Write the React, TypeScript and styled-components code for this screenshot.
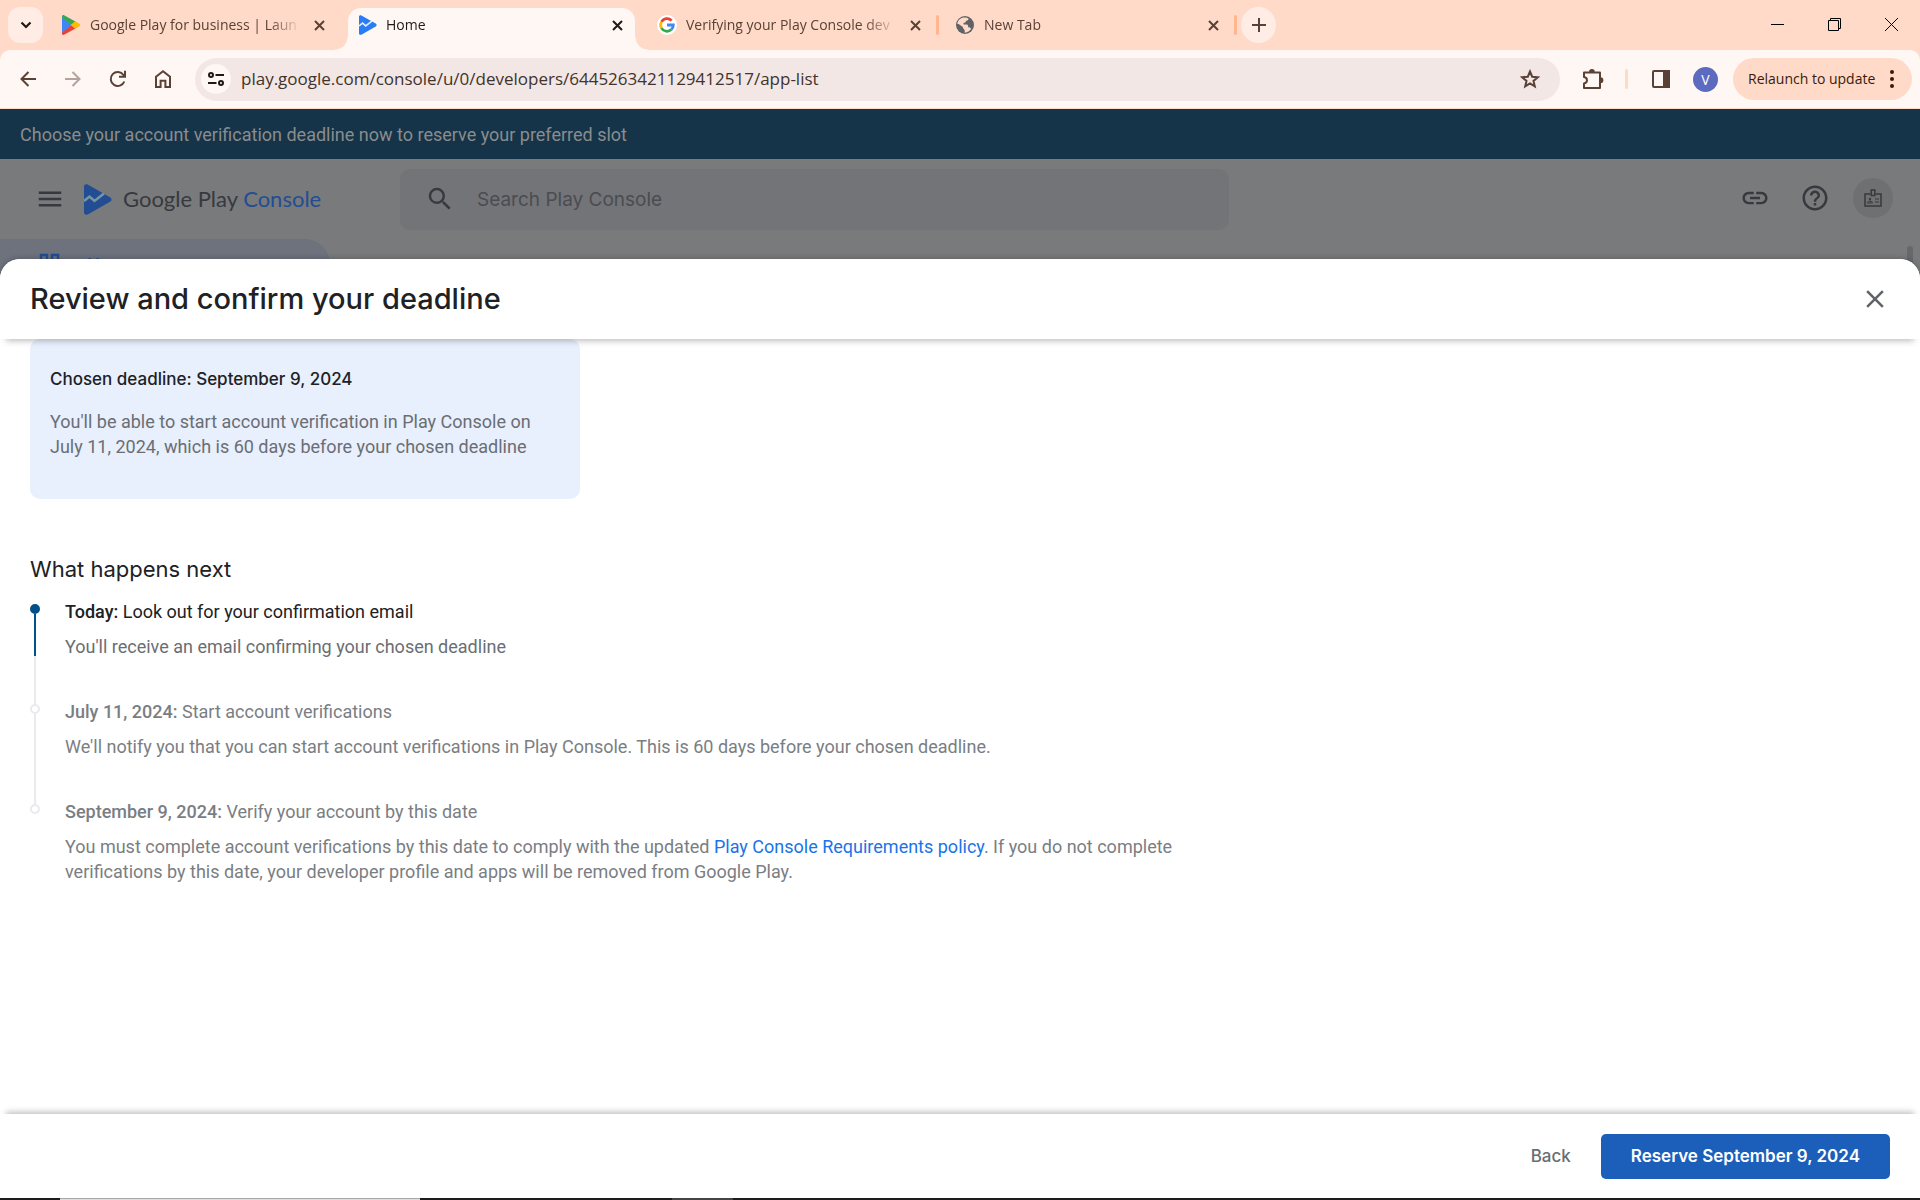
import React from "react";
import styled, { createGlobalStyle } from "styled-components";
import { MdLink, MdHelpOutline, MdSearch, MdMenu, MdClose } from "react-icons/md";

const chromeFont = `"Open Sans", "Noto Sans", sans-serif`;
const bodyFont = `Roboto, "Liberation Sans", sans-serif`;
const displayFont = `Inter, Roboto, sans-serif`;
const brandFont = `Lato, Inter, sans-serif`;

const GlobalStyle = createGlobalStyle`
  *, *::before, *::after { box-sizing: border-box; }
  body { margin: 0; font-family: ${bodyFont}; }
  button { border: 0; padding: 0; background: none; font: inherit; color: inherit; cursor: pointer; }
  input { border: 0; padding: 0; background: none; font: inherit; outline: 0; min-width: 0; }
  h1, h2, h3, p, ol { margin: 0; padding: 0; }
  svg { display: block; flex: none; }
`;

const Screen = styled.div`
  display: flex;
  flex-direction: column;
  height: 100vh;
  overflow: hidden;
  background: #fff;
`;

/* ---------- browser tab strip ---------- */

const TabStrip = styled.header`
  display: flex;
  height: 50px;
  padding-left: 8px;
  background: #ffdac8;
  color: #5a4136;
  font-family: ${chromeFont};
`;

const StripButton = styled.button<{ $round?: boolean }>`
  display: grid;
  place-items: center;
  flex: none;
  width: 35px;
  height: 36px;
  margin: 7px 6px 0 0;
  border-radius: ${(p) => (p.$round ? "50%" : "12px")};
  background: #ffece4;
  color: ${(p) => (p.$round ? "#5a4136" : "#201a17")};
`;

const TabSlot = styled.div`
  flex: 0 1 298px;
  min-width: 0;
  display: flex;
  padding: 8px 4px 0 1px;
`;

const TabBody = styled.div<{ $active?: boolean }>`
  position: relative;
  flex: 1;
  min-width: 0;
  display: flex;
  align-items: center;
  padding: 0 8px 8px 11px;
  border-radius: 13px 13px 0 0;
  background: ${(p) => (p.$active ? "#fff7f4" : "transparent")};
  color: ${(p) => (p.$active ? "#201a17" : "#5a4136")};
  &::before, &::after {
    content: "";
    display: ${(p) => (p.$active ? "block" : "none")};
    position: absolute;
    bottom: 0;
    width: 13px;
    height: 13px;
  }
  &::before { right: 100%; background: radial-gradient(circle at 0 0, transparent 12px, #fff7f4 13px); }
  &::after { left: 100%; background: radial-gradient(circle at 100% 0, transparent 12px, #fff7f4 13px); }
`;

const TabTitle = styled.span`
  flex: 1;
  min-width: 0;
  margin: 0 8px 0 9px;
  overflow: hidden;
  white-space: nowrap;
  font-size: 14px;
  line-height: 22px;
  mask-image: linear-gradient(to right, #000 calc(100% - 32px), transparent);
`;

const TabClose = styled.button`
  display: grid;
  place-items: center;
  flex: none;
  width: 20px;
  height: 20px;
`;

const TabDivider = styled.span<{ $shown?: boolean }>`
  flex: none;
  width: 3px;
  height: 20px;
  margin: 7px 0 0 3px;
  border-radius: 2px;
  background: ${(p) => (p.$shown ? "#ffb68f" : "transparent")};
`;

const WindowControls = styled.div`
  display: flex;
  margin-left: auto;
  color: #000;
`;

const WindowButton = styled.button`
  display: grid;
  place-items: center;
  width: 57px;
  height: 49px;
`;

/* ---------- browser toolbar ---------- */

const ToolbarBack = styled.div`
  background: #ffdac8;
  padding-bottom: 1px;
`;

const Toolbar = styled.nav`
  display: flex;
  align-items: center;
  gap: 15px;
  height: 58px;
  padding: 0 8px 0 10px;
  border-radius: 10px 10px 0 0;
  background: #fff7f4;
  color: #5a4136;
  font-family: ${chromeFont};
`;

const NavButtons = styled.div`
  display: flex;
  gap: 10px;
`;

const ToolButton = styled.button<{ $muted?: boolean }>`
  display: grid;
  place-items: center;
  flex: none;
  width: 35px;
  height: 35px;
  color: ${(p) => (p.$muted ? "#b4a39c" : "#5a4136")};
`;

const Omnibox = styled.div`
  flex: 1;
  min-width: 0;
  display: flex;
  align-items: center;
  height: 43px;
  padding: 0 13px 0 6px;
  border-radius: 22px;
  background: #f2e7e4;
`;

const SiteButton = styled.button`
  display: grid;
  place-items: center;
  flex: none;
  width: 30px;
  height: 30px;
  border-radius: 50%;
  background: #fff7f4;
  color: #201a17;
`;

const UrlInput = styled.input`
  flex: 1;
  margin: 0 10px;
  font-size: 17px;
  line-height: 24px;
  color: #41332d;
`;

const ToolDivider = styled.span`
  flex: none;
  width: 3px;
  height: 20px;
  border-radius: 2px;
  background: #ffdac8;
`;

const Avatar = styled.button`
  flex: none;
  width: 25px;
  height: 25px;
  border-radius: 50%;
  background: #5c6bc0;
  color: #fff;
  font-size: 14px;
  line-height: 25px;
`;

const RelaunchButton = styled.button`
  display: flex;
  align-items: center;
  justify-content: space-between;
  flex: none;
  min-width: 179px;
  height: 42px;
  padding: 0 18px 0 15px;
  border-radius: 21px;
  background: #ffdac8;
  color: #3a1a0a;
  font-size: 14px;
  line-height: 22px;
`;

/* ---------- dimmed console page ---------- */

const Page = styled.div`
  position: relative;
  flex: 1;
  min-height: 0;
  background: #797a7c;
`;

const Banner = styled.div`
  display: flex;
  align-items: center;
  height: 50px;
  padding: 0 20px;
  background: #153449;
  color: #8b8c8c;
  font-size: 18px;
  line-height: 25px;
`;

const ConsoleHeader = styled.div`
  display: flex;
  align-items: center;
  height: 80px;
  padding: 0 27px 0 35px;
  color: #37393e;
`;

const PlainButton = styled.button`
  display: grid;
  place-items: center;
  flex: none;
`;

const ActionButton = styled(PlainButton)`
  width: 44px;
  height: 44px;
`;

const Brand = styled.a`
  display: flex;
  align-items: center;
  flex: none;
  gap: 11px;
  width: 316px;
  margin: 0 0 0 19px;
  color: #37393e;
  font-family: ${brandFont};
  font-size: 22px;
  line-height: 30px;
  text-decoration: none;
`;

const BrandAccent = styled.span`
  color: #234d92;
`;

const SearchBox = styled.label`
  flex: 0 1 829px;
  min-width: 0;
  display: flex;
  align-items: center;
  gap: 22px;
  height: 61px;
  padding: 0 25px;
  border-radius: 10px;
  background: #737478;
`;

const SearchInput = styled.input`
  flex: 1;
  font-family: ${displayFont};
  font-size: 19px;
  line-height: 25px;
  &::placeholder { color: #4a4c50; opacity: 1; }
`;

const HeaderActions = styled.div`
  display: flex;
  align-items: center;
  gap: 16px;
  margin-left: auto;
  padding-bottom: 3px;
`;

const AccountButton = styled.button`
  display: grid;
  place-items: center;
  width: 40px;
  height: 40px;
  border-radius: 50%;
  background: #6f7072;
`;

const PageBody = styled.div`
  display: flex;
  justify-content: space-between;
`;

const NavLink = styled.a`
  display: flex;
  align-items: center;
  gap: 27px;
  width: 330px;
  height: 50px;
  padding-left: 38px;
  border-radius: 0 25px 25px 0;
  background: #6d727d;
  color: #234d92;
  font-size: 18px;
  font-weight: 500;
  text-decoration: none;
`;

const ScrollThumb = styled.span`
  width: 6px;
  height: 120px;
  margin: 7px 7px 0 0;
  border-radius: 3px;
  background: #67686b;
`;

/* ---------- dialog ---------- */

const Dialog = styled.section`
  position: absolute;
  inset: 150px 0 0;
  display: flex;
  flex-direction: column;
  border-radius: 20px 20px 0 0;
  background: #fff;
  box-shadow: 0 0 6px rgba(0, 0, 0, 0.25);
  color: #202124;
`;

const DialogHeader = styled.div`
  display: flex;
  align-items: center;
  justify-content: space-between;
  flex: none;
  height: 80px;
  padding: 0 30px;
  border-radius: 20px 20px 0 0;
  background: #fff;
  box-shadow: 0 8px 6px -6px rgba(0, 0, 0, 0.26);
  z-index: 1;
`;

const DialogTitle = styled.h1`
  font-family: ${displayFont};
  font-size: 29px;
  font-weight: 450;
  line-height: 34px;
`;

const CloseButton = styled(PlainButton)`
  width: 30px;
  height: 30px;
  color: #5f6368;
`;

const DialogContent = styled.div`
  flex: 1;
  min-height: 0;
  padding: 0 30px;
  overflow: hidden;
  font-size: 18px;
  line-height: 25px;
`;

const DeadlineCard = styled.div`
  max-width: 550px;
  padding: 28px 20px 40px;
  border-radius: 10px;
  background: #e8effd;
`;

const CardTitle = styled.h2`
  margin-bottom: 17px;
  font-family: ${displayFont};
  font-size: 17px;
  font-weight: 500;
  line-height: 25px;
`;

const CardText = styled.p`
  color: #6a6e73;
`;

const SectionTitle = styled.h2`
  margin: 55px 0 20px;
  font-family: ${displayFont};
  font-size: 22px;
  font-weight: 400;
  line-height: 30px;
`;

const Timeline = styled.ol`
  max-width: 1170px;
  list-style: none;
`;

const Step = styled.li`
  display: flex;
  gap: 25px;
`;

const Marker = styled.span`
  display: flex;
  flex-direction: column;
  align-items: center;
  flex: none;
  width: 10px;
`;

const Dot = styled.span<{ $current?: boolean }>`
  width: 10px;
  height: 10px;
  border: 2px solid ${(p) => (p.$current ? "#01508a" : "#e8eaed")};
  border-radius: 50%;
  background: ${(p) => (p.$current ? "#01508a" : "#fff")};
`;

const Line = styled.span<{ $current?: boolean }>`
  flex: 1;
  width: 2px;
  background: ${(p) => (p.$current ? "linear-gradient(#01508a 42px, #e8eaed 42px)" : "#e8eaed")};
`;

const StepText = styled.div<{ $last?: boolean }>`
  margin-top: -5px;
  padding-bottom: ${(p) => (p.$last ? "0" : "45px")};
  color: #7a7e83;
`;

const StepTitle = styled.h3<{ $current?: boolean }>`
  margin-bottom: 10px;
  font-size: 18px;
  font-weight: 400;
  line-height: 25px;
  color: ${(p) => (p.$current ? "#202124" : "#7a7e83")};
  b { font-weight: 500; }
`;

const StepBody = styled.p<{ $current?: boolean }>`
  color: ${(p) => (p.$current ? "#6a6e73" : "#7a7e83")};
`;

const PolicyLink = styled.a`
  color: #1a73e8;
  text-decoration: none;
`;

const DialogFooter = styled.div`
  display: flex;
  align-items: center;
  justify-content: flex-end;
  gap: 30px;
  flex: none;
  height: 84px;
  padding: 0 30px;
  background: #fff;
  box-shadow: 0 -8px 6px -6px rgba(0, 0, 0, 0.26);
  font-family: ${displayFont};
  font-size: 17px;
  line-height: 25px;
`;

const BackButton = styled.button`
  height: 45px;
  color: #6a6d72;
  font-weight: 500;
`;

const ReserveButton = styled.button`
  height: 45px;
  padding: 0 30px;
  border-radius: 5px;
  background: #1b5fbb;
  color: #fff;
  font-weight: 600;
`;

/* ---------- desktop task bar edge ---------- */

const TaskbarEdge = styled.div`
  display: flex;
  flex: none;
  height: 2px;
  padding-left: 60px;
  background: #221f22;
`;

const TaskSearch = styled.span`
  width: 360px;
  margin-right: 252px;
  border-top: 1px solid #bdbdbd;
  background: #f2f2f2;
`;

const TaskItem = styled.span`
  width: 61px;
  background: #4d4b4d;
`;

/* ---------- icons ---------- */

const CrossIcon = () => (
  <svg width="11" height="11" viewBox="0 0 11 11" fill="none" stroke="currentColor" strokeWidth="2">
    <path d="M1 1l9 9M10 1l-9 9" />
  </svg>
);

const PlayStoreIcon = () => (
  <svg width="20" height="20" viewBox="0 0 20 20">
    <path d="M1 2v16l9-8z" fill="#4285f4" />
    <path d="M1 1.600C1 .2 2.400-.3 3.500.4L14.500 6.400 10 10 1 2.800z" fill="#34a853" />
    <path d="M1 18.400c0 1.400 1.400 1.900 2.500 1.200l11-6L10 10l-9 7.200z" fill="#ea4335" />
    <path d="M14.200 6.200 18 8.400c1.400.8 1.400 2.400 0 3.200l-3.800 2.200L10 10z" fill="#fbbc04" />
    <path d="M1 2.600v14.800l9-7.400z" fill="#4285f4" />
  </svg>
);

const ConsoleIcon = ({ w, h, fill, line }: { w: number; h: number; fill: string; line: string }) => (
  <svg width={w} height={h} viewBox="0 0 28 32" preserveAspectRatio="none">
    <path d="M0 2.500C0 .6 2 -.4 3.700.6L26 13.600c2 1.200 2 3.600 0 4.800L3.700 31.400C2 32.400 0 31.400 0 29.500z" fill={fill} />
    <path d="M0 17.500 5.500 13l5 4.500L20 9.800" fill="none" stroke={line} strokeWidth="2.600" />
  </svg>
);

const GoogleIcon = () => (
  <svg width="20" height="20" viewBox="0 0 20 20">
    <circle cx="10" cy="10" r="10" fill="#fff" />
    <g fill="none" strokeWidth="2.800">
      <path d="M14.600 5.600A6.300 6.300 0 0 0 4.500 6.900" stroke="#ea4335" />
      <path d="M4.500 6.900a6.300 6.300 0 0 0 0 6.200" stroke="#fbbc04" />
      <path d="M4.500 13.100a6.300 6.300 0 0 0 9.800 1.500" stroke="#34a853" />
      <path d="M14.300 14.600A6.300 6.300 0 0 0 16.300 10H10" stroke="#4285f4" />
    </g>
  </svg>
);

const GlobeIcon = () => (
  <svg width="20" height="20" viewBox="0 0 20 20">
    <circle cx="10" cy="10" r="9" fill="#5f6368" />
    <path d="M8.500 2.500c2.500-.2 4 .3 5 1 .2 1.600-1 2.200-2.300 2.300-.4 1.700-1.500 2-2.700 2.100v1.700h3.200c1.400.2 1.500 1.500 1.500 2.600l1.700.4 1.300 1.200a8 8 0 0 1-6.400 3.900c-.4-1 .3-2-.4-3-1-.6-1.500-1.500-1.500-2.600L4 9.300c-.7-.5-1.400-.7-1.800-.6C2.700 5.400 5.200 3 8.500 2.500z" fill="#ffdac8" />
  </svg>
);

const tabs = [
  { title: "Google Play for business | Laun", icon: <PlayStoreIcon /> },
  { title: "Home", icon: <ConsoleIcon w={18} h={20} fill="#2a7bf6" line="#d6f0ff" />, active: true },
  { title: "Verifying your Play Console dev", icon: <GoogleIcon />, divider: true },
  { title: "New Tab", icon: <GlobeIcon />, divider: true },
];

const steps = [
  {
    date: "Today:",
    title: "Look out for your confirmation email",
    body: "You'll receive an email confirming your chosen deadline",
    current: true,
  },
  {
    date: "July 11, 2024:",
    title: "Start account verifications",
    body: "We'll notify you that you can start account verifications in Play Console. This is 60 days before your chosen deadline.",
  },
  {
    date: "September 9, 2024:",
    title: "Verify your account by this date",
    body: (
      <>
        You must complete account verifications by this date to comply with the updated{" "}
        <PolicyLink href="#policy">Play Console Requirements policy</PolicyLink>. If you do not complete
        verifications by this date, your developer profile and apps will be removed from Google Play.
      </>
    ),
  },
];

const BrowserTabs = () => (
  <TabStrip>
    <StripButton aria-label="Search tabs">
      <svg width="12" height="8" viewBox="0 0 12 8" fill="none" stroke="currentColor" strokeWidth="2.200">
        <path d="M1.500 1.500 6 6l4.500-4.500" />
      </svg>
    </StripButton>
    {tabs.map((tab) => (
      <TabSlot key={tab.title}>
        <TabBody $active={tab.active}>
          {tab.icon}
          <TabTitle>{tab.title}</TabTitle>
          <TabClose aria-label={`Close ${tab.title}`}>
            <CrossIcon />
          </TabClose>
        </TabBody>
        <TabDivider $shown={tab.divider} />
      </TabSlot>
    ))}
    <StripButton $round aria-label="New tab">
      <svg width="14" height="14" viewBox="0 0 14 14" stroke="currentColor" strokeWidth="2">
        <path d="M7 0v14M0 7h14" />
      </svg>
    </StripButton>
    <WindowControls>
      <WindowButton aria-label="Minimize">
        <svg width="13" height="13" viewBox="0 0 13 13" stroke="currentColor">
          <path d="M0 6.500h13" />
        </svg>
      </WindowButton>
      <WindowButton aria-label="Restore">
        <svg width="13" height="13" viewBox="0 0 13 13" fill="none" stroke="currentColor">
          <path d="M.5 2.500h10v10H.5zM2.500 2.500v-2h10v10h-2" />
        </svg>
      </WindowButton>
      <WindowButton aria-label="Close window">
        <svg width="13" height="13" viewBox="0 0 13 13" stroke="currentColor">
          <path d="M0 0l13 13M13 0 0 13" />
        </svg>
      </WindowButton>
    </WindowControls>
  </TabStrip>
);

const BrowserToolbar = () => (
  <ToolbarBack>
    <Toolbar>
      <NavButtons>
        <ToolButton aria-label="Back">
          <svg width="16" height="16" viewBox="0 0 16 16" fill="none" stroke="currentColor" strokeWidth="2">
            <path d="M16 8H1.500M8.500 1 1.500 8l7 7" />
          </svg>
        </ToolButton>
        <ToolButton $muted aria-label="Forward">
          <svg width="16" height="16" viewBox="0 0 16 16" fill="none" stroke="currentColor" strokeWidth="2">
            <path d="M0 8h14.500M7.500 1l7 7-7 7" />
          </svg>
        </ToolButton>
        <ToolButton aria-label="Reload">
          <svg width="18" height="18" viewBox="0 0 18 18" fill="none" stroke="currentColor" strokeWidth="2">
            <path d="M15.300 11.500A7 7 0 1 1 14.500 5l1.500 1.800M16 .8v6h-6" />
          </svg>
        </ToolButton>
        <ToolButton aria-label="Home">
          <svg width="18" height="18" viewBox="0 0 18 18" fill="none" stroke="currentColor" strokeWidth="2">
            <path d="M2 6.800 9 1.300l7 5.500V17h-4.600v-6.200H6.600V17H2z" />
          </svg>
        </ToolButton>
      </NavButtons>
      <Omnibox>
        <SiteButton aria-label="View site information">
          <svg width="16" height="14" viewBox="0 0 16 14" fill="none" stroke="currentColor" strokeWidth="2">
            <circle cx="3" cy="3" r="2" />
            <path d="M7.500 3H16M0 11h8.500" />
            <circle cx="13" cy="11" r="2" />
          </svg>
        </SiteButton>
        <UrlInput
          aria-label="Address"
          defaultValue="play.google.com/console/u/0/developers/6445263421129412517/app-list"
        />
        <ToolButton aria-label="Bookmark this tab">
          <svg width="20" height="20" viewBox="0 0 20 20" fill="none" stroke="currentColor" strokeWidth="2">
            <path d="M10 2.500l2.200 5.200 5.600.5-4.300 3.700 1.300 5.500-4.800-2.900-4.800 2.900 1.300-5.500-4.300-3.700 5.600-.5z" />
          </svg>
        </ToolButton>
      </Omnibox>
      <ToolButton aria-label="Extensions">
        <svg width="22" height="22" viewBox="0 0 22 22" fill="none" stroke="currentColor" strokeWidth="2">
          <path d="M2 4.500h16V20H2v-4.500c2-.3 3-1.500 3-3.200S4 9.300 2 9z" strokeLinejoin="round" />
          <path d="M7 4a2.900 2.900 0 0 1 5.800 0zM18.500 9.300a2.900 2.900 0 0 1 0 5.800z" fill="currentColor" stroke="none" />
        </svg>
      </ToolButton>
      <ToolDivider />
      <ToolButton aria-label="Side panel">
        <svg width="18" height="18" viewBox="0 0 18 18" fill="none" stroke="currentColor" strokeWidth="2">
          <rect x="1" y="1" width="16" height="16" rx="1" />
          <path d="M12 1h5v16h-5z" fill="currentColor" />
        </svg>
      </ToolButton>
      <Avatar aria-label="Profile V">V</Avatar>
      <RelaunchButton>
        Relaunch to update
        <svg width="4" height="18" viewBox="0 0 4 18" fill="currentColor">
          <circle cx="2" cy="2" r="2" />
          <circle cx="2" cy="9" r="2" />
          <circle cx="2" cy="16" r="2" />
        </svg>
      </RelaunchButton>
    </Toolbar>
  </ToolbarBack>
);

const ConsolePage = () => (
  <>
    <Banner>Choose your account verification deadline now to reserve your preferred slot</Banner>
    <ConsoleHeader>
      <PlainButton aria-label="Main menu">
        <MdMenu size={30} />
      </PlainButton>
      <Brand href="#home">
        <ConsoleIcon w={28} h={31} fill="#234d92" line="#7495a5" />
        <span>
          Google Play <BrandAccent>Console</BrandAccent>
        </span>
      </Brand>
      <SearchBox>
        <MdSearch size={30} />
        <SearchInput type="search" placeholder="Search Play Console" aria-label="Search Play Console" />
      </SearchBox>
      <HeaderActions>
        <ActionButton aria-label="Copy link">
          <MdLink size={30} />
        </ActionButton>
        <ActionButton aria-label="Help">
          <MdHelpOutline size={30} />
        </ActionButton>
        <AccountButton aria-label="Developer account">
          <svg width="18" height="18" viewBox="0 0 18 18" fill="none" stroke="currentColor" strokeWidth="1.500">
            <path d="M6.500 5H1v12h16V5h-5.500" />
            <path d="M7.200 1h3.600v5.500H7.200z" />
            <circle cx="6" cy="10" r="1.200" fill="currentColor" stroke="none" />
            <path d="M3.500 14c0-2.500 5-2.500 5 0zM11 10h4M11 13h4" strokeWidth="1" />
          </svg>
        </AccountButton>
      </HeaderActions>
    </ConsoleHeader>
    <PageBody>
      <NavLink href="#home">
        <svg width="22" height="22" viewBox="0 0 22 22" fill="none" stroke="currentColor" strokeWidth="2.500">
          <rect x="3" y="2" width="6" height="7" />
          <rect x="14" y="2" width="6" height="7" />
          <rect x="3" y="13" width="6" height="7" />
          <rect x="14" y="13" width="6" height="7" />
        </svg>
        Home
      </NavLink>
      <ScrollThumb />
    </PageBody>
  </>
);

const DeadlineDialog = () => (
  <Dialog role="dialog" aria-labelledby="dialog-title">
    <DialogHeader>
      <DialogTitle id="dialog-title">Review and confirm your deadline</DialogTitle>
      <CloseButton aria-label="Close">
        <MdClose size={30} />
      </CloseButton>
    </DialogHeader>
    <DialogContent>
      <DeadlineCard>
        <CardTitle>Chosen deadline: September 9, 2024</CardTitle>
        <CardText>
          You'll be able to start account verification in Play Console on July 11, 2024, which is 60 days before
          your chosen deadline
        </CardText>
      </DeadlineCard>
      <SectionTitle>What happens next</SectionTitle>
      <Timeline>
        {steps.map((step, i) => {
          const last = i === steps.length - 1;
          return (
            <Step key={step.date}>
              <Marker>
                <Dot $current={step.current} />
                {!last && <Line $current={step.current} />}
              </Marker>
              <StepText $last={last}>
                <StepTitle $current={step.current}>
                  <b>{step.date}</b> {step.title}
                </StepTitle>
                <StepBody $current={step.current}>{step.body}</StepBody>
              </StepText>
            </Step>
          );
        })}
      </Timeline>
    </DialogContent>
    <DialogFooter>
      <BackButton>Back</BackButton>
      <ReserveButton>Reserve September 9, 2024</ReserveButton>
    </DialogFooter>
  </Dialog>
);

export default function App() {
  return (
    <Screen>
      <GlobalStyle />
      <BrowserTabs />
      <BrowserToolbar />
      <Page>
        <ConsolePage />
        <DeadlineDialog />
      </Page>
      <TaskbarEdge>
        <TaskSearch />
        <TaskItem />
      </TaskbarEdge>
    </Screen>
  );
}
